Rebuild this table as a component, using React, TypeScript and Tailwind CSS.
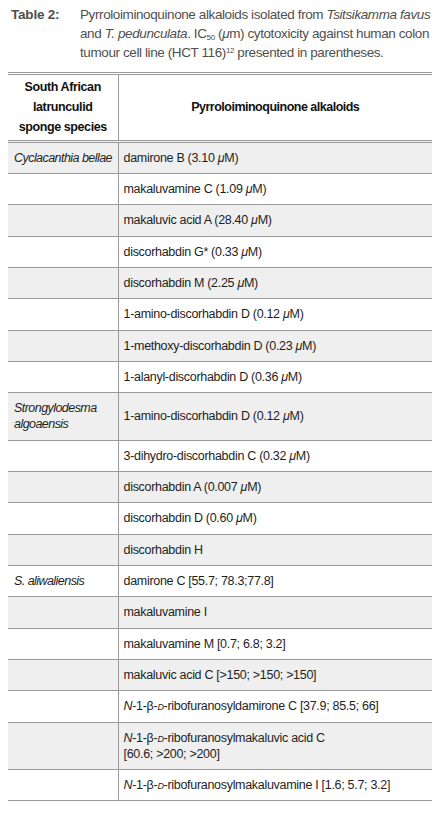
const mu = <i>μ</i>;
const dee = <span className="italic [font-variant:small-caps]">d</span>;

type Row = { species?: React.ReactNode; compound: React.ReactNode };

const rows: Row[] = [
  { species: "Cyclacanthia bellae", compound: <>damirone B (3.10 {mu}M)</> },
  { compound: <>makaluvamine C (1.09 {mu}M)</> },
  { compound: <>makaluvic acid A (28.40 {mu}M)</> },
  { compound: <>discorhabdin G* (0.33 {mu}M)</> },
  { compound: <>discorhabdin M (2.25 {mu}M)</> },
  { compound: <>1-amino-discorhabdin D (0.12 {mu}M)</> },
  { compound: <>1-methoxy-discorhabdin D (0.23 {mu}M)</> },
  { compound: <>1-alanyl-discorhabdin D (0.36 {mu}M)</> },
  {
    species: (
      <>
        Strongylodesma
        <br />
        algoaensis
      </>
    ),
    compound: <>1-amino-discorhabdin D (0.12 {mu}M)</>,
  },
  { compound: <>3-dihydro-discorhabdin C (0.32 {mu}M)</> },
  { compound: <>discorhabdin A (0.007 {mu}M)</> },
  { compound: <>discorhabdin D (0.60 {mu}M)</> },
  { compound: <>discorhabdin H</> },
  { species: "S. aliwaliensis", compound: <>damirone C [55.7; 78.3;77.8]</> },
  { compound: <>makaluvamine I</> },
  { compound: <>makaluvamine M [0.7; 6.8; 3.2]</> },
  { compound: <>makaluvic acid C [&gt;150; &gt;150; &gt;150]</> },
  {
    compound: (
      <>
        <i>N</i>-1-β-{dee}-ribofuranosyldamirone C [37.9; 85.5; 66]
      </>
    ),
  },
  {
    compound: (
      <>
        <i>N</i>-1-β-{dee}-ribofuranosylmakaluvic acid C
        <br />
        [60.6; &gt;200; &gt;200]
      </>
    ),
  },
  {
    compound: (
      <>
        <i>N</i>-1-β-{dee}-ribofuranosylmakaluvamine I [1.6; 5.7; 3.2]
      </>
    ),
  },
];

export default function App() {
  return (
    <div className="w-[440px] min-h-[813px] bg-white pt-[4.5px] font-['Liberation_Sans',Arial,sans-serif] text-[#1e1e1e]">
      <div className="flex pl-[11px] text-[13.5px] leading-[19px] tracking-[-0.4px] text-[#4f4f4f]">
        <div className="w-[69px] shrink-0 font-bold tracking-[-0.2px]">Table 2:</div>
        <p className="whitespace-nowrap">
          Pyrroloiminoquinone alkaloids isolated from <i>Tsitsikamma favus</i>
          <br />
          and <i>T. pedunculata</i>. IC<sub className="text-[8px]">50</sub> ({mu}m) cytotoxicity against
          human colon
          <br />
          tumour cell line (HCT 116)<sup className="text-[8px]">12</sup> presented in parentheses.
        </p>
      </div>

      <table className="mx-[8px] mt-[10px] w-[424px] border-collapse text-[12.5px] tracking-[-0.3px]">
        <thead>
          <tr className="border-y-[3px] border-double border-[#9a9a9a]">
            <th className="w-[110px] border-r border-[#9a9a9a] py-[2.5px] text-center font-bold leading-[20px] tracking-[-0.4px] text-[#111]">
              South African
              <br />
              latrunculid
              <br />
              sponge species
            </th>
            <th className="text-center font-bold leading-[20px] tracking-[-0.5px] text-[#111]">
              Pyrroloiminoquinone alkaloids
            </th>
          </tr>
        </thead>
        <tbody>
          {rows.map((r, i) => (
            <tr key={i} className={`border-b border-[#9a9a9a] ${i % 2 === 0 ? "bg-[#efefef]" : "bg-white"}`}>
              <td className="whitespace-nowrap border-r border-[#9a9a9a] pl-[6px] pt-[7px] pb-[7.35px] align-top italic leading-[16px] tracking-[-0.55px]">
                {r.species}
              </td>
              <td className="pl-[5px] pt-[7px] pb-[7.35px] align-middle leading-[16px]">{r.compound}</td>
            </tr>
          ))}
        </tbody>
      </table>
    </div>
  );
}
